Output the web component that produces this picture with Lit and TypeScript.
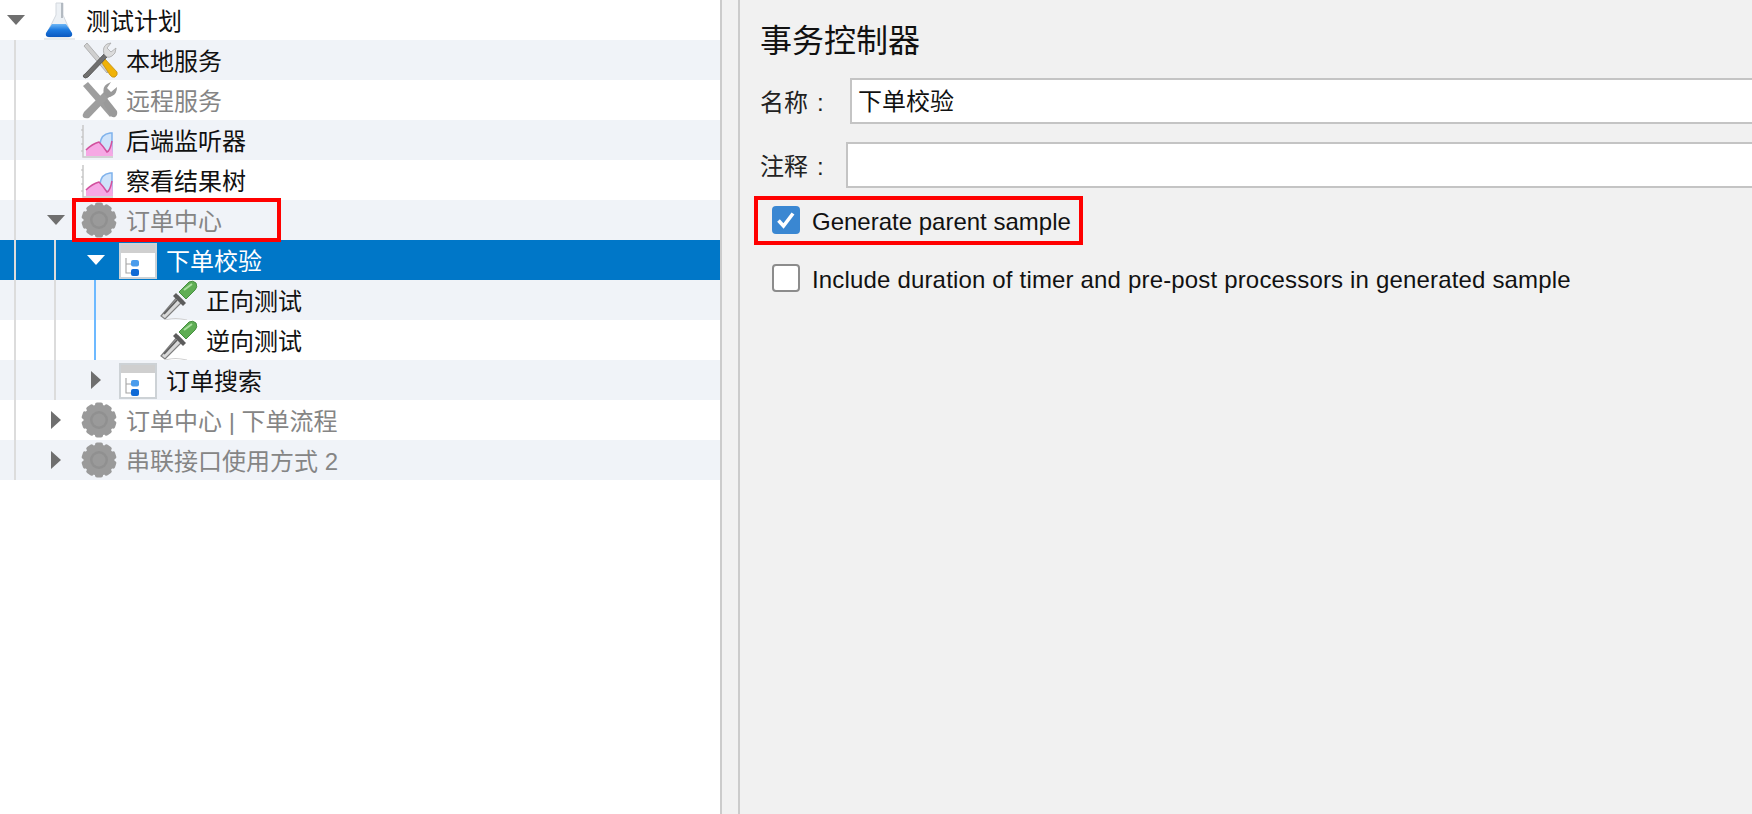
import { LitElement, html, css, svg } from "lit";
import { customElement } from "lit/decorators.js";

type Ic = "flask" | "tools" | "toolsOff" | "chart" | "gear" | "win" | "drop";
interface Row { t: string; d: number; ic: Ic; a?: "open" | "closed"; off?: boolean; sel?: boolean }

const rows: Row[] = [
  { t: "测试计划", d: 0, ic: "flask", a: "open" },
  { t: "本地服务", d: 1, ic: "tools" },
  { t: "远程服务", d: 1, ic: "toolsOff", off: true },
  { t: "后端监听器", d: 1, ic: "chart" },
  { t: "察看结果树", d: 1, ic: "chart" },
  { t: "订单中心", d: 1, ic: "gear", a: "open", off: true },
  { t: "下单校验", d: 2, ic: "win", a: "open", sel: true },
  { t: "正向测试", d: 3, ic: "drop" },
  { t: "逆向测试", d: 3, ic: "drop" },
  { t: "订单搜索", d: 2, ic: "win", a: "closed" },
  { t: "订单中心 | 下单流程", d: 1, ic: "gear", a: "closed", off: true },
  { t: "串联接口使用方式 2", d: 1, ic: "gear", a: "closed", off: true },
];

const gearTeeth = Array.from({ length: 10 }, (_, i) => i * 36);

const icons: Record<Ic, unknown> = {
  flask: svg`
    <defs><linearGradient id="liq" x1="0" y1="0" x2="0" y2="1"><stop offset="0" stop-color="#6db6f5"/><stop offset="0.45" stop-color="#1c7ae0"/><stop offset="1" stop-color="#0a58bf"/></linearGradient></defs>
    <path d="M17 3 L17 15 L8 33 Q7 37 11 37 L29 37 Q33 37 32 33 L24 15 L24 3 Z" fill="#edf1f5" stroke="#d3d8de" stroke-width="1"/>
    <path d="M13 24 L27 24 L33 33 Q34 37 30 37 L10 37 Q6 37 7 33 Z" fill="url(#liq)"/>
    <path d="M23 3 L23 18" stroke="#a6aeb6" stroke-width="1.6"/>
    <path d="M5 39 L36 39" stroke="#dfe2e6" stroke-width="1.4"/>`,
  tools: svg`
    <path d="M5 6 L8 3 L31 30 L28 33 Z" fill="#cfcfcf" stroke="#a5a5a5" stroke-width="0.8"/>
    <path d="M23 23 L26 19 L38 32 Q39 35 36 37 Q33 38 31 35 Z" fill="#f0b208" stroke="#c08e10" stroke-width="0.8"/>
    <path d="M6 34 L25 14 L28 17 L9 37 Q6 39 4.500 37 Q3.500 35 6 34 Z" fill="#707070" stroke="#4e4e4e" stroke-width="0.8"/>
    <path d="M25 14 Q23 7 28 4 L32 3 L28 8 L32 12 L37 8 Q37 14 33 16 Q30 18 28 17 Z" fill="#dcdcdc" stroke="#a8a8a8" stroke-width="0.8"/>`,
  toolsOff: svg`
    <path d="M4 6 L9 2 L36 32 L31 37 Z" fill="#9e9e9e"/>
    <path d="M23 21 L27 17 L38 31 Q39 35 36 37 Q33 38 31 35 Z" fill="#9a9a9a"/>
    <path d="M5 32 L25 12 L30 17 L10 38 Q6 39 4 37 Q3 35 5 32 Z" fill="#9e9e9e"/>
    <path d="M25 14 Q23 7 28 4 L32 2 L28 8 L32 12 L38 7 Q38 14 33 16 Q30 18 28 17 Z" fill="#9a9a9a"/>`,
  chart: svg`
    <path d="M4 5 L4 37 L34 37" fill="none" stroke="#c8c8c8" stroke-width="1.5"/>
    <path d="M2 10 H4 M2 17 H4 M2 24 H4 M2 31 H4" stroke="#bdbdbd" stroke-width="1"/>
    <path d="M21 24 Q22 14 31 13 L33 13 L33 33 L26 31 Z" fill="#cfe3fa" stroke="#7fb2ec" stroke-width="1.5"/>
    <path d="M7 36 L7 30 Q13 24 20 22 Q24 26 28 32 Q31 31 33 21 L34 36 Z" fill="#f6a8e4"/>
    <path d="M7 30 Q13 24 20 22 Q24 26 28 32 Q31 31 33 21" fill="none" stroke="#d2509e" stroke-width="1.5"/>`,
  gear: svg`
    ${gearTeeth.map((r) => svg`<rect x="16" y="2.500" width="8" height="7" rx="2" fill="#9a9a9a" transform="rotate(${r} 20 20)"/>`)}
    <circle cx="20" cy="20" r="15.500" fill="#9a9a9a"/>
    <circle cx="20" cy="20" r="9" fill="#909090"/>
    <circle cx="20" cy="20" r="6.500" fill="#9a9a9a"/>`,
  win: svg`
    <rect x="1" y="4" width="36" height="34" fill="#fff" stroke="#cdd2d6" stroke-width="2"/>
    <rect x="2" y="5" width="34" height="8" fill="#cfcfcf"/>
    <path d="M7 18 L7 33 L12 33 M7 24 L12 24" fill="none" stroke="#a4a4a4" stroke-width="1.1"/>
    <rect x="12" y="20" width="8" height="6.500" rx="2" fill="#4a9cec"/>
    <rect x="12" y="29" width="8" height="7" rx="2" fill="#0f6ad6"/>`,
  drop: svg`
    <path d="M2 36 L19 16 L24 21 L6 39 Z" fill="#d8d8d8" stroke="#808080" stroke-width="1.2"/>
    <path d="M5 34 L18 20" stroke="#5e5e5e" stroke-width="1.8"/>
    <path d="M17 13 L27 23 L24 26 L14 16 Z" fill="#5c5c5c"/>
    <path d="M20 12 L30 2 Q34 0 37 3 Q39 7 36 10 L27 19 Z" fill="#5fae54" stroke="#468f40" stroke-width="1"/>
    <path d="M25 10 L33 4" stroke="#aadfa0" stroke-width="2"/>
    <path d="M6 40 Q16 37 28 40" fill="none" stroke="#d0d0d0" stroke-width="1.2"/>`,
};

@customElement("app-root")
export class AppRoot extends LitElement {
  static styles = css`
    :host {
      display: flex;
      width: 100%;
      height: 814px;
      overflow: hidden;
      position: relative;
      background: #f1f1f1;
      font-family: "Liberation Sans", "Noto Sans CJK SC", sans-serif;
      color: #111;
    }
    .tree {
      position: relative;
      flex: 0 0 720px;
      background: #fff;
      font-size: 24px;
    }
    .row {
      height: 40px;
      display: flex;
      align-items: center;
      white-space: nowrap;
    }
    .row.alt { background: #f0f3f8; }
    .row.off { color: #858585; }
    .row.sel { background: #0077c8; color: #fff; }
    .name { padding-bottom: 2px; }
    .arrow {
      flex: 0 0 32px;
      display: flex;
      justify-content: center;
      align-items: center;
    }
    .tri-open {
      width: 0;
      height: 0;
      border-left: 9px solid transparent;
      border-right: 9px solid transparent;
      border-top: 10px solid #6f6f6f;
    }
    .sel .tri-open { border-top-color: #fff; }
    .tri-closed {
      width: 0;
      height: 0;
      border-top: 9px solid transparent;
      border-bottom: 9px solid transparent;
      border-left: 10px solid #6f6f6f;
    }
    .icon {
      flex: 0 0 54px;
      height: 40px;
      padding-left: 7px;
      box-sizing: border-box;
    }
    .icon svg { display: block; width: 40px; height: 40px; filter: blur(0.45px); }
    .guide { position: absolute; width: 2px; }
    .g1 { left: 14px; top: 40px; height: 440px; background: #dcdcdc; }
    .g2 { left: 54px; top: 240px; height: 160px; background: #dcdcdc; }
    .g3 { left: 94px; top: 280px; height: 80px; background: #6db9ff; }
    .split {
      flex: 0 0 16px;
      border-left: 2px solid #cbcbcb;
      border-right: 2px solid #cbcbcb;
    }
    .panel {
      flex: 1;
      min-width: 0;
      padding: 18px 0 0 20px;
      font-size: 24px;
    }
    .title {
      font-family: "Noto Sans CJK SC", sans-serif;
      font-size: 32px;
      line-height: 40px;
      font-weight: 400;
      margin: 0 0 20px;
    }
    .field {
      display: flex;
      align-items: center;
      margin-bottom: 18px;
      margin-right: -20px;
    }
    .label { color: #222; white-space: pre; padding-bottom: 2px; }
    .label.n { flex: 0 0 90px; }
    .label.c { flex: 0 0 86px; }
    .colon { margin-left: 9px; }
    .box {
      flex: 1;
      height: 46px;
      box-sizing: border-box;
      background: #fff;
      border: 2px solid #c4c4c4;
      padding-left: 6px;
      line-height: 44px;
    }
    .check {
      display: flex;
      align-items: center;
      gap: 12px;
      height: 28px;
      padding-left: 12px;
      white-space: nowrap;
      color: #111;
    }
    .check.first { margin-top: 18px; margin-bottom: 30px; }
    .check-text { padding-top: 4px; }
    .check-text.long { letter-spacing: 0.17px; }
    .cb {
      flex: 0 0 28px;
      height: 28px;
      box-sizing: border-box;
      border-radius: 4px;
    }
    .cb.on { background: #3a87d2; }
    .cb.on svg { display: block; width: 28px; height: 28px; }
    .cb.no { background: #fff; border: 2px solid #8c8c8c; }
    .mark {
      position: absolute;
      box-sizing: border-box;
      border: 4px solid #f00;
      pointer-events: none;
    }
    .m1 { left: 72px; top: 198px; width: 209px; height: 44px; }
    .m2 { left: 754px; top: 196px; width: 329px; height: 49px; }
  `;

  private renderRow(r: Row, i: number) {
    const cls = ["row", i % 2 === 1 ? "alt" : "", r.off ? "off" : "", r.sel ? "sel" : ""].join(" ");
    return html`<div class=${cls} style="padding-left:${r.d * 40}px">
      <span class="arrow">
        ${r.a === "open" ? html`<span class="tri-open"></span>` : r.a === "closed" ? html`<span class="tri-closed"></span>` : ""}
      </span>
      <span class="icon"><svg viewBox="0 0 40 40">${icons[r.ic]}</svg></span>
      <span class="name">${r.t}</span>
    </div>`;
  }

  render() {
    return html`
      <div class="tree">
        ${rows.map((r, i) => this.renderRow(r, i))}
        <div class="guide g1"></div>
        <div class="guide g2"></div>
        <div class="guide g3"></div>
      </div>
      <div class="split"></div>
      <div class="panel">
        <h1 class="title">事务控制器</h1>
        <div class="field"><span class="label n">名称<span class="colon">:</span></span><div class="box">下单校验</div></div>
        <div class="field"><span class="label c">注释<span class="colon">:</span></span><div class="box"></div></div>
        <div class="check first">
          <span class="cb on"><svg viewBox="0 0 28 28"><path d="M6.5 14.5 L11.5 20 L21 7.5" fill="none" stroke="#fff" stroke-width="3.6"/></svg></span>
          <span class="check-text">Generate parent sample</span>
        </div>
        <div class="check">
          <span class="cb no"></span>
          <span class="check-text long">Include duration of timer and pre-post processors in generated sample</span>
        </div>
      </div>
      <div class="mark m1"></div>
      <div class="mark m2"></div>
    `;
  }
}
